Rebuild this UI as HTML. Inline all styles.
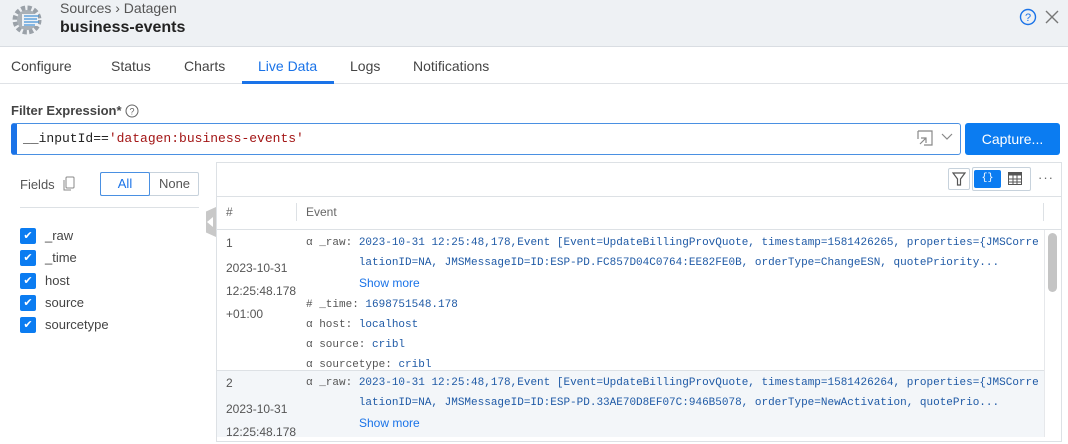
<!DOCTYPE html>
<html><head><meta charset="utf-8"><style>
*{box-sizing:border-box;margin:0;padding:0}
body{width:1068px;height:437px;overflow:hidden;background:#fff;font-family:"Liberation Sans",sans-serif;color:#333;position:relative}
.abs{position:absolute}
.mono{font-family:"Liberation Mono",monospace;font-size:11px}
.k{color:#555}.v{color:#1f5aa6}
.ts{color:#555;font-size:12px}
.sm{font-family:'Liberation Sans';font-size:12px;color:#1a73e8;padding-left:53px;display:inline-block}
</style></head><body>
<div class="abs" style="left:0;top:0;width:1068px;height:47px;background:#eef1f4;border-bottom:1px solid #d9dde2"></div>
<svg class="abs" style="left:12px;top:3px" width="32" height="34" viewBox="0 0 32 34">
<circle cx="15" cy="17" r="12" fill="none" stroke="#9aa1a8" stroke-width="5" stroke-dasharray="4 2.3"/>
<circle cx="15" cy="17" r="10" fill="#a9b0b6"/>
<rect x="10" y="11" width="16" height="12" fill="#eef1f4"/>
<g stroke="#3f8fd6" stroke-width="1.2"><line x1="12" y1="13" x2="27" y2="13"/><line x1="12" y1="16" x2="25" y2="16"/><line x1="12" y1="19" x2="27" y2="19"/><line x1="12" y1="22" x2="23" y2="22"/></g>
</svg>
<div class="abs" style="left:60px;top:0px;font-size:14px;color:#555">Sources › Datagen</div>
<div class="abs" style="left:60px;top:19px;font-size:16px;font-weight:bold;color:#222">business-events</div>
<svg class="abs" style="left:1019px;top:8px" width="18" height="18" viewBox="0 0 18 18"><circle cx="9" cy="9" r="7.5" fill="none" stroke="#1a73e8" stroke-width="1.4"/><text x="9" y="13" text-anchor="middle" font-size="11" font-family="Liberation Sans" fill="#1a73e8">?</text></svg>
<svg class="abs" style="left:1045px;top:10px" width="14" height="14"><path d="M1 1L13 13M13 1L1 13" stroke="#777" stroke-width="1.4"/></svg>
<div class="abs" style="left:0;top:83px;width:1068px;height:1px;background:#dfe2e6"></div>
<div class="abs" style="top:58px;left:11px;font-size:14px;color:#444">Configure</div>
<div class="abs" style="top:58px;left:111px;font-size:14px;color:#444">Status</div>
<div class="abs" style="top:58px;left:184px;font-size:14px;color:#444">Charts</div>
<div class="abs" style="top:58px;left:258px;font-size:14px;color:#1a73e8">Live Data</div>
<div class="abs" style="top:81px;left:242px;width:92px;height:3px;background:#1a73e8"></div>
<div class="abs" style="top:58px;left:350px;font-size:14px;color:#444">Logs</div>
<div class="abs" style="top:58px;left:413px;font-size:14px;color:#444">Notifications</div>
<div class="abs" style="top:103px;left:11px;font-size:13px;font-weight:bold;color:#444">Filter Expression*</div>
<svg class="abs" style="left:125px;top:104px" width="14" height="14"><circle cx="7" cy="7" r="6" fill="none" stroke="#666" stroke-width="1"/><text x="7" y="10.5" text-anchor="middle" font-size="9" fill="#666" font-family="Liberation Sans">?</text></svg>
<div class="abs" style="left:11px;top:123px;width:950px;height:32px;border:1px solid #4a90e2;border-left:6px solid #1a73e8;border-radius:3px"></div>
<div class="abs mono" style="left:23px;top:131px;font-size:13px;color:#222">__inputId==<span style="color:#a31515">'datagen:business-events'</span></div>
<svg class="abs" style="left:916px;top:130px" width="18" height="18"><path d="M2 1H16V15H8M2 1V9M4 14L10 8M5 8H10V13" fill="none" stroke="#888" stroke-width="1.2"/></svg>
<svg class="abs" style="left:941px;top:133px" width="12" height="8"><path d="M1 1L6 6L11 1" fill="none" stroke="#888" stroke-width="1.2"/></svg>
<div class="abs" style="left:965px;top:123px;width:95px;height:32px;background:#0b7cf1;border-radius:3px;color:#fff;font-size:14px;text-align:center;line-height:32px">Capture...</div>

<div class="abs" style="left:20px;top:177px;font-size:13px;color:#555">Fields</div>
<svg class="abs" style="left:62px;top:176px" width="14" height="15"><rect x="4" y="1" width="8" height="11" rx="1" fill="none" stroke="#888"/><path d="M2 4V14H9" fill="none" stroke="#888"/></svg>
<div class="abs" style="left:100px;top:172px;width:99px;height:24px;border:1px solid #c7d2dc;border-radius:2px"></div>
<div class="abs" style="left:100px;top:172px;width:50px;height:24px;border:1px solid #4a90e2;border-radius:2px;color:#1a73e8;font-size:13px;text-align:center;line-height:22px">All</div>
<div class="abs" style="left:150px;top:172px;width:49px;height:24px;color:#555;font-size:13px;text-align:center;line-height:24px">None</div>
<div class="abs" style="left:20px;top:207px;width:179px;height:1px;background:#dde1e5"></div>
<div class="abs" style="left:20px;top:225px;font-size:13px;color:#444;line-height:22.3px">
<div style="display:flex;align-items:center"><span style="display:inline-block;width:16px;height:16px;background:#0b7cf1;border-radius:2px;margin-right:9px;color:#fff;font-size:11px;text-align:center;line-height:16px">✔</span>_raw</div>
<div style="display:flex;align-items:center"><span style="display:inline-block;width:16px;height:16px;background:#0b7cf1;border-radius:2px;margin-right:9px;color:#fff;font-size:11px;text-align:center;line-height:16px">✔</span>_time</div>
<div style="display:flex;align-items:center"><span style="display:inline-block;width:16px;height:16px;background:#0b7cf1;border-radius:2px;margin-right:9px;color:#fff;font-size:11px;text-align:center;line-height:16px">✔</span>host</div>
<div style="display:flex;align-items:center"><span style="display:inline-block;width:16px;height:16px;background:#0b7cf1;border-radius:2px;margin-right:9px;color:#fff;font-size:11px;text-align:center;line-height:16px">✔</span>source</div>
<div style="display:flex;align-items:center"><span style="display:inline-block;width:16px;height:16px;background:#0b7cf1;border-radius:2px;margin-right:9px;color:#fff;font-size:11px;text-align:center;line-height:16px">✔</span>sourcetype</div>
</div>

<div class="abs" style="left:216px;top:162px;width:846px;height:280px;border:1px solid #dde1e5"></div>
<div class="abs" style="left:206px;top:207px;width:10px;height:30px;background:#c8c8c8;clip-path:polygon(0 15%,100% 0,100% 100%,0 85%)"></div>
<div class="abs" style="left:207px;top:217px;width:0;height:0;border-top:5px solid transparent;border-bottom:5px solid transparent;border-right:6px solid #fff"></div>
<div class="abs" style="left:948px;top:168px;width:22px;height:22px;border:1px solid #c7d2dc;border-radius:2px"></div>
<svg class="abs" style="left:952px;top:172px" width="14" height="14"><path d="M1 1H13L8.5 7V13H5.5V7Z" fill="none" stroke="#555" stroke-width="1.2"/></svg>
<div class="abs" style="left:972px;top:167px;width:59px;height:24px;border:1px solid #c7d2dc;border-radius:2px"></div>
<div class="abs" style="left:974px;top:170px;width:27px;height:18px;background:#0b7cf1;border-radius:2px;color:#fff;font-size:10px;text-align:center;line-height:18px;font-family:'Liberation Mono'">{}</div>
<svg class="abs" style="left:1008px;top:172px" width="14" height="13"><rect x="0.5" y="0.5" width="13" height="12" fill="none" stroke="#555"/><rect x="0.5" y="0.5" width="13" height="3" fill="#555"/><path d="M0 7H14M0 10H14M5 3V13M9 3V13" stroke="#555"/></svg>
<div class="abs" style="left:1038px;top:170px;font-size:13px;color:#666;letter-spacing:1px">···</div>
<div class="abs" style="left:217px;top:196px;width:844px;height:1px;background:#dde1e5"></div>
<div class="abs" style="left:226px;top:205px;font-size:12px;color:#666">#</div>
<div class="abs" style="left:296px;top:203px;width:1px;height:18px;background:#dde1e5"></div>
<div class="abs" style="left:1043px;top:203px;width:1px;height:18px;background:#dde1e5"></div>
<div class="abs" style="left:306px;top:205px;font-size:12px;color:#666">Event</div>
<div class="abs" style="left:217px;top:229px;width:844px;height:1px;background:#dde1e5"></div>
<div class="abs" style="left:217px;top:370px;width:827px;height:67px;background:#f3f6f9;border-top:1px solid #dde1e5"></div>
<div class="abs" style="left:1044px;top:230px;width:17px;height:207px;border-left:1px solid #e6e8eb;background:#fff"></div>
<div class="abs" style="left:1048px;top:233px;width:9px;height:59px;background:#c4c4c4;border-radius:5px"></div>

<div class="abs ts" style="left:226px;top:233px;line-height:20px">1</div>
<div class="abs ts" style="left:226px;top:257px;line-height:23px">2023-10-31<br>12:25:48.178<br>+01:00</div>
<div class="abs mono" style="left:306px;top:233px;line-height:20px;white-space:pre"><span class="k">α _raw:</span> <span class="v">2023-10-31 12:25:48,178,Event [Event=UpdateBillingProvQuote, timestamp=1581426265, properties={JMSCorre</span>
<span class="v">        lationID=NA, JMSMessageID=ID:ESP-PD.FC857D04C0764:EE82FE0B, orderType=ChangeESN, quotePriority...</span>
<span class="sm">Show more</span>
<span class="k"># _time:</span> <span class="v">1698751548.178</span>
<span class="k">α host:</span> <span class="v">localhost</span>
<span class="k">α source:</span> <span class="v">cribl</span>
<span class="k">α sourcetype:</span> <span class="v">cribl</span></div>
<div class="abs ts" style="left:226px;top:373px;line-height:20px">2</div>
<div class="abs ts" style="left:226px;top:398px;line-height:23px">2023-10-31<br>12:25:48.178</div>
<div class="abs mono" style="left:306px;top:373px;line-height:20px;white-space:pre"><span class="k">α _raw:</span> <span class="v">2023-10-31 12:25:48,178,Event [Event=UpdateBillingProvQuote, timestamp=1581426264, properties={JMSCorre</span>
<span class="v">        lationID=NA, JMSMessageID=ID:ESP-PD.33AE70D8EF07C:946B5078, orderType=NewActivation, quotePrio...</span>
<span class="sm">Show more</span></div>
</body></html>
